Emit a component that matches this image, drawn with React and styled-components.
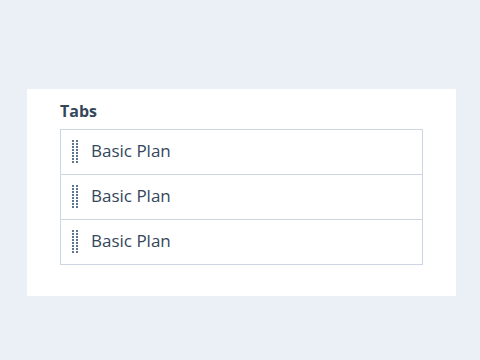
import React from "react";
import styled, { createGlobalStyle } from "styled-components";

const GlobalStyle = createGlobalStyle`
    html, body {
        margin: 0;
        padding: 0;
        background: #eaf0f6;
        font-family: "Open Sans", "Noto Sans", sans-serif;
        color: #33475b;
    }
`;

const plans = ["Basic Plan", "Basic Plan", "Basic Plan"];

const DragHandle = () => (
    <svg width="6" height="24" viewBox="0 0 6 24">
        {Array.from({ length: 8 }).map((_, i) => (
            <g key={i} fill="#5e7590">
                <rect x="0" y={i * 3} width="2" height="2" />
                <rect x="4" y={i * 3} width="2" height="2" />
            </g>
        ))}
    </svg>
);

const App = () => {
    return (
        <>
            <GlobalStyle />
            <StyledPage>
                <StyledCard>
                    <StyledTitle>Tabs</StyledTitle>
                    <StyledList>
                        {plans.map((plan, i) => (
                            <StyledRow key={i}>
                                <StyledHandle>
                                    <DragHandle />
                                </StyledHandle>
                                <StyledLabel>{plan}</StyledLabel>
                            </StyledRow>
                        ))}
                    </StyledList>
                </StyledCard>
            </StyledPage>
        </>
    );
};

export default App;

const StyledPage = styled.div`
    width: 480px;
    height: 360px;
    padding: 89px 24px 0 27px;
    box-sizing: border-box;
`;
const StyledCard = styled.div`
    width: 429px;
    background: #fff;
    padding: 12px 33px 31px 33px;
    box-sizing: border-box;
`;
const StyledTitle = styled.div`
    font-size: 16px;
    font-weight: 700;
    line-height: 20px;
    margin-bottom: 8px;
    color: #33475b;
`;
const StyledList = styled.div`
    border: 1px solid #cbd6e2;
    display: flex;
    flex-direction: column;
`;
const StyledRow = styled.div`
    display: flex;
    align-items: center;
    height: 44px;
    padding-left: 11px;
    border-bottom: 1px solid #cbd6e2;
    &:last-child {
        border-bottom: none;
    }
`;
const StyledHandle = styled.span`
    display: flex;
    margin-right: 13px;
`;
const StyledLabel = styled.span`
    font-size: 17px;
    line-height: 20px;
    margin-top: -2px;
    color: #33475b;
`;
